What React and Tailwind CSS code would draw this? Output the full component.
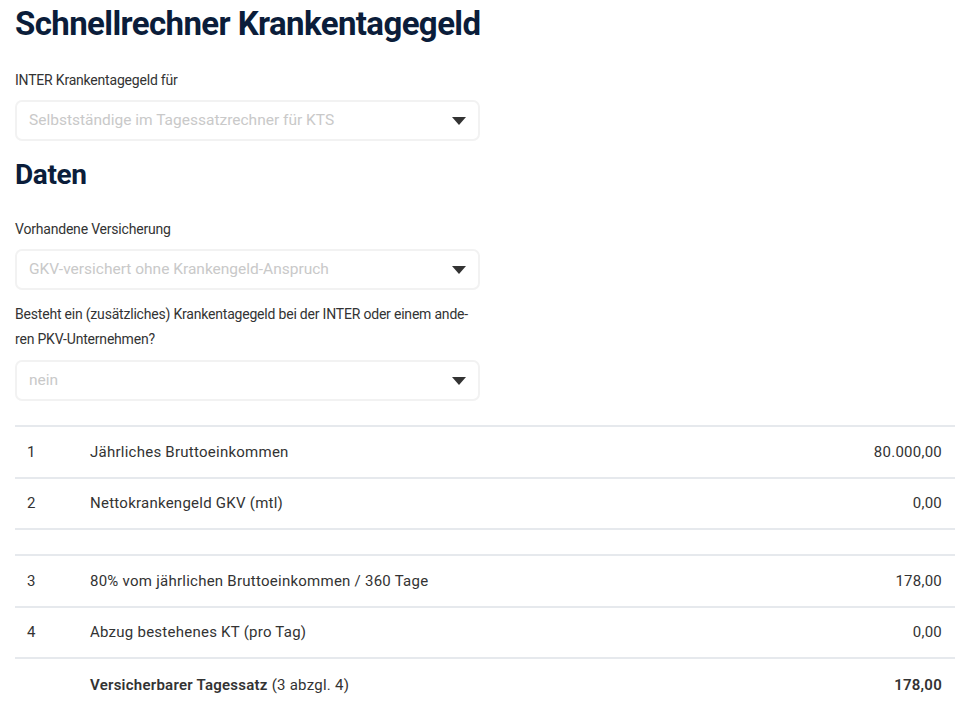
import React from "react";

function Select({ value }) {
  return (
    <div className="flex h-[41px] w-[465px] items-center justify-between rounded-[7px] border-2 border-[#f2f2f2] bg-white pl-[12px] pr-[12px]">
      <span className="text-[15.5px] text-[#c9c9c9]" style={{ fontFamily: "Roboto, sans-serif" }}>{value}</span>
      <svg width="14" height="8" viewBox="0 0 14 8"><path d="M0 0 L14 0 L7 8 Z" fill="#333" /></svg>
    </div>
  );
}

const rows = [
  { n: "1", label: "Jährliches Bruttoeinkommen", v: "80.000,00" },
  { n: "2", label: "Nettokrankengeld GKV (mtl)", v: "0,00" },
  null,
  { n: "3", label: "80% vom jährlichen Bruttoeinkommen / 360 Tage", v: "178,00" },
  { n: "4", label: "Abzug bestehenes KT (pro Tag)", v: "0,00" },
];

export default function App() {
  return (
    <div className="min-h-screen bg-white px-[15px] text-[#333]" style={{ fontFamily: "Roboto, 'Noto Sans', sans-serif" }}>
      <h1 className="pt-[4px] text-[33px] font-bold leading-[40px] tracking-[-0.6px] text-[#0b1d3a]">Schnellrechner Krankentagegeld</h1>
      <div className="mt-[24px] text-[14px] leading-[24px] tracking-[-0.2px]">INTER Krankentagegeld für</div>
      <div className="mt-[8px]"><Select value="Selbstständige im Tagessatzrechner für KTS" /></div>
      <h2 className="mt-[14px] text-[28px] font-bold leading-[40px] tracking-[-0.4px] text-[#0b1d3a]">Daten</h2>
      <div className="mt-[22px] text-[14px] leading-[24px] tracking-[-0.2px]">Vorhandene Versicherung</div>
      <div className="mt-[8px]"><Select value="GKV-versichert ohne Krankengeld-Anspruch" /></div>
      <div className="mt-[12px] w-[465px] text-[14px] leading-[25px] tracking-[-0.2px]">Besteht ein (zusätzliches) Krankentagegeld bei der INTER oder einem ande-<br />ren PKV-Unternehmen?</div>
      <div className="mt-[8px]"><Select value="nein" /></div>
      <div className="mt-[24px] w-[940px] border-t-2 border-[#e6e9ed] text-[15px] tracking-[0.25px]">
        {rows.map((r, i) =>
          r === null ? (
            <div key={i} className="h-[26px] border-b-2 border-[#e6e9ed]" />
          ) : (
            <div key={i} className="flex h-[51.5px] items-center border-b-2 border-[#e6e9ed] pr-[13px]">
              <span className="w-[75px] pl-[12px]">{r.n}</span>
              <span className="flex-1">{r.label}</span>
              <span>{r.v}</span>
            </div>
          )
        )}
        <div className="flex h-[52px] items-center pr-[13px]">
          <span className="w-[75px] pl-[12px]"></span>
          <span className="flex-1"><b className="font-semibold">Versicherbarer Tagessatz</b> (3 abzgl. 4)</span>
          <span className="font-semibold">178,00</span>
        </div>
      </div>
    </div>
  );
}
